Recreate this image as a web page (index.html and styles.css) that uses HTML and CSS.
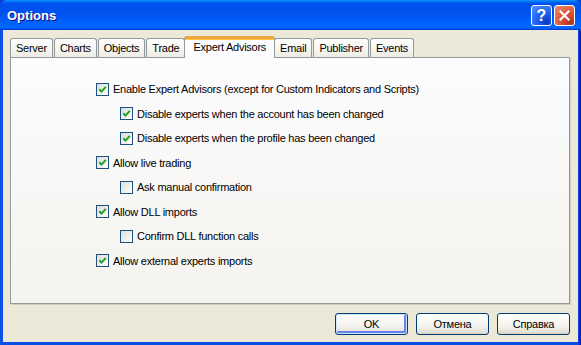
FILE: index.html
```html
<!DOCTYPE html>
<html lang="en">
<head>
    <meta charset="UTF-8">
    <title>Options</title>
    <link rel="stylesheet" href="styles.css">
</head>
<body>
    <div class="window">
        <div class="titlebar">
            <span class="title">Options</span>
            <div class="title-buttons">
                <span class="tb-btn help">?</span>
                <span class="tb-btn close">
                    <svg width="11" height="11" viewBox="0 0 11 11"><path d="M1.5 1.5 L9.5 9.5 M9.5 1.5 L1.5 9.5" stroke="#fff" stroke-width="2.2" stroke-linecap="square"/></svg>
                </span>
            </div>
        </div>

        <div class="client">
            <div class="tabs">
                <div class="tab">Server</div>
                <div class="tab">Charts</div>
                <div class="tab">Objects</div>
                <div class="tab">Trade</div>
                <div class="tab active">Expert Advisors</div>
                <div class="tab">Email</div>
                <div class="tab">Publisher</div>
                <div class="tab">Events</div>
            </div>

            <div class="panel">
                <ul class="options">
                    <li class="opt"><span class="check on"><svg width="9" height="9" viewBox="0 0 9 9"><path d="M1.3 4.2 L3.5 6.6 L7.8 1.8" fill="none" stroke="#21a121" stroke-width="2"/></svg></span>Enable Expert Advisors (except for Custom Indicators and Scripts)</li>
                    <li class="opt sub"><span class="check on"><svg width="9" height="9" viewBox="0 0 9 9"><path d="M1.3 4.2 L3.5 6.6 L7.8 1.8" fill="none" stroke="#21a121" stroke-width="2"/></svg></span>Disable experts when the account has been changed</li>
                    <li class="opt sub"><span class="check on"><svg width="9" height="9" viewBox="0 0 9 9"><path d="M1.3 4.2 L3.5 6.6 L7.8 1.8" fill="none" stroke="#21a121" stroke-width="2"/></svg></span>Disable experts when the profile has been changed</li>
                    <li class="opt"><span class="check on"><svg width="9" height="9" viewBox="0 0 9 9"><path d="M1.3 4.2 L3.5 6.6 L7.8 1.8" fill="none" stroke="#21a121" stroke-width="2"/></svg></span>Allow live trading</li>
                    <li class="opt sub"><span class="check"></span>Ask manual confirmation</li>
                    <li class="opt"><span class="check on"><svg width="9" height="9" viewBox="0 0 9 9"><path d="M1.3 4.2 L3.5 6.6 L7.8 1.8" fill="none" stroke="#21a121" stroke-width="2"/></svg></span>Allow DLL imports</li>
                    <li class="opt sub"><span class="check"></span>Confirm DLL function calls</li>
                    <li class="opt"><span class="check on"><svg width="9" height="9" viewBox="0 0 9 9"><path d="M1.3 4.2 L3.5 6.6 L7.8 1.8" fill="none" stroke="#21a121" stroke-width="2"/></svg></span>Allow external experts imports</li>
                </ul>
            </div>

            <div class="actions">
                <button class="btn default">OK</button>
                <button class="btn">Отмена</button>
                <button class="btn">Справка</button>
            </div>
        </div>
    </div>
</body>
</html>
```

FILE: styles.css
```css
html, body {
    margin: 0;
    padding: 0;
    background-color: #0a3ed8;
}
body {
    font-family: "Liberation Sans", Arial, sans-serif;
    font-size: 11px;
    letter-spacing: -0.25px;
    color: #000;
}
.window {
    width: 581px;
    height: 345px;
    display: flex;
    flex-direction: column;
    background: linear-gradient(to right, #0831d9 0, #166aee 1px, #0a4ee6 2px, #0a4ee6 578px, #0831d9 579px, #001ea0 581px);
    border-radius: 7px 7px 0 0;
    overflow: hidden;
}
.titlebar {
    height: 30px;
    flex: none;
    display: flex;
    align-items: center;
    justify-content: space-between;
    padding: 0 5px 0 7px;
    background: linear-gradient(#0997ff 0%, #0053ee 10%, #0050ee 40%, #0066ff 85%, #0066ff 92%, #005bff 95%, #003dd7 97%, #003dd7 100%);
}
.title {
    color: #fff;
    font-weight: bold;
    font-size: 13px;
    letter-spacing: 0;
    text-shadow: 1px 1px #0f1089;
    margin-top: 1px;
}
.title-buttons {
    display: flex;
    gap: 2px;
    margin-top: 1px;
    margin-right: 1px;
}
.tb-btn {
    width: 19px;
    height: 19px;
    border: 1px solid #fff;
    border-radius: 3px;
    display: flex;
    align-items: center;
    justify-content: center;
    color: #fff;
}
.tb-btn.help {
    background: radial-gradient(circle at 75% 85%, #0a3cc2 0, #1f5ff0 45%, #4b8bff 90%);
    font-weight: bold;
    font-size: 16px;
    letter-spacing: 0;
}
.tb-btn.close {
    background: radial-gradient(circle at 85% 90%, #b0321c 0, #d9502f 40%, #ec8a6c 95%);
}
.client {
    flex: 1;
    margin: 0 3px 3px 3px;
    background-color: #ece9d8;
    display: flex;
    flex-direction: column;
    padding: 5px 8px 7px 7px;
}
.tabs {
    height: 22px;
    display: flex;
    align-items: flex-end;
    gap: 1px;
    position: relative;
    z-index: 1;
}
.tab {
    height: 18px;
    padding: 0 5px;
    border: 1px solid #919b9c;
    border-bottom: none;
    border-radius: 3px 3px 0 0;
    background: linear-gradient(#fefefe, #f6f5f1 60%, #ecebe4);
    line-height: 19px;
    text-align: center;
}
.tab.active {
    margin: 0 -2px -1px -2px;
    padding: 0 8px;
    border-top: 3px solid #f1a33c;
    box-shadow: inset 0 1px #ffc73c;
    background: #fcfcfe;
    line-height: 16px;
    height: 19px;
}
.panel {
    height: 245px;
    border: 1px solid #919b9c;
    background: linear-gradient(#fcfcfe, #f4f3ee);
    box-shadow: 1px 1px 0 #d0cec4;
}
.options {
    list-style: none;
    margin: 0;
    padding: 19px 0 0 85px;
}
.opt {
    height: 24.5px;
    display: flex;
    align-items: center;
}
.opt.sub {
    margin-left: 24px;
}
.check {
    width: 11px;
    height: 11px;
    border: 1px solid #1c5180;
    margin-right: 4px;
    background: linear-gradient(135deg, #dcdcd7, #fff);
    display: flex;
    align-items: center;
    justify-content: center;
}
.actions {
    margin-top: 9px;
    display: flex;
    justify-content: flex-end;
    gap: 8px;
}
.btn {
    width: 73px;
    height: 22px;
    border: 1px solid #003c74;
    border-radius: 3px;
    background: linear-gradient(#fff, #f4f3ee 60%, #e3e1d6 90%, #d6d0c5);
    font-family: "Liberation Sans", Arial, sans-serif;
    font-size: 11px;
    letter-spacing: -0.25px;
    color: #000;
    padding: 0;
}
.btn.default {
    box-shadow: inset 0 0 0 1px #cee7ff, inset -1px -1px 0 2px #6982ee;
}
```
